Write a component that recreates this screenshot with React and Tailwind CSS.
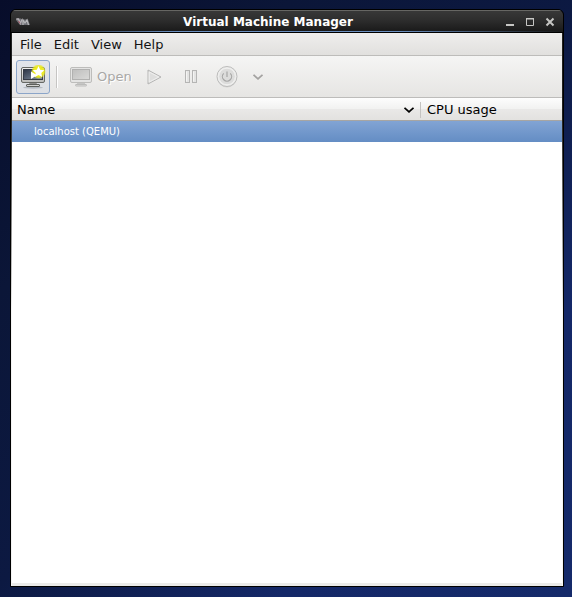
import React from "react";

const menus = ["File", "Edit", "View", "Help"];

function VmLogo() {
  return (
    <svg width="14" height="8" viewBox="0 0 14 8" fill="none" aria-hidden="true">
      <path d="M0 0.500h5l1 1h6l2 5.500H4L0 2z" fill="#707076" />
      <path d="M0.500 1h2l1.800 4.500L6 1.500" stroke="#b4b0b5" strokeWidth="1.400" />
      <path d="M7 7V2l2 3 2-3 1.500 5" stroke="#b9b9bb" strokeWidth="1.200" />
      <path d="M2.500 3l1.500 2.500" stroke="#a05560" strokeWidth="1" />
    </svg>
  );
}

function NewVmIcon() {
  return (
    <svg width="26" height="24" viewBox="0 0 26 24" aria-hidden="true">
      <defs>
        <linearGradient id="newScreen" x1="0" y1="0" x2="1" y2="1">
          <stop offset="0" stopColor="#2b3444" />
          <stop offset="1" stopColor="#8392a5" />
        </linearGradient>
        <linearGradient id="newFrame" x1="0" y1="0" x2="0" y2="1">
          <stop offset="0" stopColor="#f2f2f1" />
          <stop offset="1" stopColor="#b9b9b7" />
        </linearGradient>
        <radialGradient id="glow">
          <stop offset="0.6" stopColor="#eeed1c" />
          <stop offset="0.8" stopColor="#e8e824" stopOpacity="0.8" />
          <stop offset="1" stopColor="#e6e62c" stopOpacity="0" />
        </radialGradient>
      </defs>
      <ellipse cx="13" cy="22.500" rx="10" ry="1.200" fill="#9ba2ac" opacity="0.6" />
      <path d="M9.500 18h7l1 2h-9z" fill="#8d8d8b" />
      <rect x="6.500" y="19.500" width="13" height="2" rx="0.500" fill="#d2d2d0" stroke="#5d5f5b" />
      <rect x="1.500" y="2.500" width="23" height="15" rx="1.500" fill="url(#newFrame)" stroke="#666864" />
      <rect x="3.500" y="4.500" width="19" height="10" fill="url(#newScreen)" stroke="#353b46" />
      <circle cx="18.500" cy="6.500" r="7.500" fill="url(#glow)" />
      <path d="M11 6.500v7.500l6-3.800z" fill="#fff" />
      <path d="M18.500 1l1.700 3.700 4.100.5-3 2.800.8 4-3.600-2-3.600 2 .8-4-3-2.800 4.100-.5z" fill="#fff" />
    </svg>
  );
}

function MonitorIcon() {
  return (
    <svg width="22" height="20" viewBox="0 0 22 20" aria-hidden="true">
      <defs>
        <linearGradient id="offScreen" x1="0" y1="0" x2="1" y2="1">
          <stop offset="0" stopColor="#bebebd" />
          <stop offset="1" stopColor="#dadad9" />
        </linearGradient>
      </defs>
      <path d="M7.500 15h7l1 3h-9z" fill="#c6c6c5" />
      <rect x="5.500" y="17.500" width="11" height="1.500" rx="0.500" fill="#dededd" stroke="#bcbcba" />
      <rect x="0.500" y="0.500" width="21" height="15" rx="1.500" fill="#e4e4e3" stroke="#bdbdbb" />
      <rect x="2.500" y="2.500" width="17" height="10" fill="url(#offScreen)" stroke="#b1b1b0" />
    </svg>
  );
}

function PlayIcon() {
  return (
    <svg width="15" height="16" viewBox="0 0 15 16" fill="none" aria-hidden="true">
      <path d="M1 1v14l13-7z" fill="#dededd" stroke="#b5b5b4" strokeLinejoin="round" />
      <path d="M2.200 3v10l9.600-5z" stroke="#f0f0ef" />
    </svg>
  );
}

function PauseIcon() {
  return (
    <svg width="12" height="13" viewBox="0 0 12 13" aria-hidden="true">
      <g fill="#e4e4e3" stroke="#b5b5b4">
        <rect x="0.500" y="0.500" width="4" height="12" />
        <rect x="7.500" y="0.500" width="4" height="12" />
      </g>
      <path d="M1.500 1.500v10M8.500 1.500v10" stroke="#f4f4f3" />
    </svg>
  );
}

function PowerIcon() {
  return (
    <svg width="22" height="22" viewBox="0 0 22 22" fill="none" aria-hidden="true">
      <circle cx="11" cy="11.500" r="10" fill="#d6d5d4" />
      <circle cx="11" cy="10.500" r="10" fill="#ececeb" stroke="#bcbcbb" />
      <circle cx="11" cy="10.500" r="8.300" fill="#dcdcdb" stroke="#f0f0ef" />
      <path d="M7.700 7.300a4.600 4.600 0 1 0 6.600 0M11 5.500v5.500" stroke="#a6a6a5" strokeWidth="1.200" />
    </svg>
  );
}

function Chevron({ className }) {
  return (
    <svg className={className} width="10" height="6" viewBox="0 0 10 6" fill="none" aria-hidden="true">
      <path d="M0.500 0.800l4.500 4 4.500-4" stroke="currentColor" strokeWidth="1.800" />
    </svg>
  );
}

function TitleBar() {
  return (
    <header className="flex h-[23px] flex-col border-b border-black bg-linear-to-b from-[#393939] via-[#2c2c2c] to-[#191919]">
      <div className="flex flex-1 items-center border-t border-[#666663] pt-0.5 pr-[7px] pl-[5px]">
        <div className="flex w-4">
          <VmLogo />
        </div>
        <h1 className="flex-1 text-center text-[12px] leading-4 font-bold text-white">
          Virtual Machine Manager
        </h1>
        <div className="flex gap-2 text-[#c6c6c4]">
          <button type="button" aria-label="Minimize" className="w-3">
            <svg className="mx-auto" width="10" height="10" viewBox="0 0 10 10">
              <path d="M1 8h8" stroke="currentColor" strokeWidth="2" />
            </svg>
          </button>
          <button type="button" aria-label="Maximize" className="w-3">
            <svg className="mx-auto" width="10" height="10" viewBox="0 0 10 10" fill="none">
              <path d="M1.500 1v7.500h7V1M1 1.500h8" stroke="currentColor" />
              <path d="M1 2h8" stroke="currentColor" />
            </svg>
          </button>
          <button type="button" aria-label="Close" className="w-3">
            <svg className="mx-auto" width="10" height="10" viewBox="0 0 10 10">
              <path d="M1.500 1.500l7 7M8.500 1.500l-7 7" stroke="currentColor" strokeWidth="2" />
            </svg>
          </button>
        </div>
      </div>
      <div className="h-px bg-[linear-gradient(90deg,#191919,#6a8fc0_30%,#6a8fc0_70%,#191919)]" />
    </header>
  );
}

function Toolbar() {
  return (
    <div
      role="toolbar"
      className="flex h-[42px] items-center border-b border-[#bdbcba] bg-linear-to-b from-[#f5f5f4] to-[#e6e5e3] px-1 text-[#a9a8a6]"
    >
      <button
        type="button"
        aria-label="Create a new virtual machine"
        className="flex size-[34px] items-center justify-center rounded-[3px] border border-[#8ba5c9] bg-linear-to-b from-[#e2e5ea] to-[#dcdfe4]"
      >
        <NewVmIcon />
      </button>
      <div className="mx-[6px] h-[22px] w-[2px] border-l border-[#c6c5c3] bg-white" />
      <button type="button" disabled className="flex items-center gap-[5px] pr-[5px] pl-[6px] text-[13px] leading-4 [text-shadow:1px_1px_0_white]">
        <MonitorIcon />
        Open
      </button>
      <button type="button" disabled aria-label="Run" className="flex w-9 justify-center">
        <PlayIcon />
      </button>
      <button type="button" disabled aria-label="Pause" className="flex w-9 justify-center">
        <PauseIcon />
      </button>
      <button type="button" disabled aria-label="Shut down" className="flex w-9 justify-center">
        <PowerIcon />
      </button>
      <button type="button" disabled aria-label="Shut down options" className="flex w-[26px] justify-center">
        <Chevron className="text-[#a3a2a0]" />
      </button>
    </div>
  );
}

function MachineTable() {
  return (
    <table className="w-full table-fixed border-separate border-spacing-0 text-left">
      <thead>
        <tr className="h-[23px] bg-[linear-gradient(#fdfdfd,#f1f1f0_50%,#e9e8e7_50%,#e2e1df)] text-[13px] leading-4 text-black">
          <th scope="col" aria-sort="ascending" className="border-b border-[#a7a5a2] p-0 pt-0.5 font-normal">
            <button type="button" className="flex w-full items-center justify-between pl-[5px]">
              Name
              <span className="flex h-4 items-center border-r border-[#c4c3c1] pr-[6px]">
                <Chevron />
              </span>
            </button>
          </th>
          <th scope="col" className="w-[141px] border-b border-[#a7a5a2] p-0 pt-0.5 pl-[6px] font-normal">
            CPU usage
          </th>
        </tr>
      </thead>
      <tbody>
        <tr className="h-[21px] bg-linear-to-b from-[#82a4d4] to-[#648dc4] text-[10px] leading-4 text-white">
          <td className="p-0 pl-[22px]">localhost (QEMU)</td>
          <td className="p-0" />
        </tr>
      </tbody>
    </table>
  );
}

export default function App() {
  return (
    <div className="flex min-h-screen flex-col bg-[linear-gradient(135deg,#070d2a,#0b1638_25%,#0c1942_50%,#142868_75%,#152a6a)] pt-[9px] pr-2 pb-[10px] pl-[10px] font-['DejaVu_Sans',sans-serif]">
      <main className="flex flex-1 flex-col overflow-hidden rounded-t-[6px] border border-black bg-black">
        <TitleBar />
        <div className="flex flex-1 flex-col bg-linear-to-b from-[#222222] from-15% to-[#f4f4f3] to-50% px-px">
          <nav className="flex h-[23px] items-center gap-3 border-b border-[#bdbcba] bg-linear-to-b from-[#efeeed] to-[#e1e0de] pt-0.5 pl-2 text-[13px] leading-4 text-[#141414]">
            {menus.map((label) => (
              <button type="button" key={label}>
                {label}
              </button>
            ))}
          </nav>
          <Toolbar />
          <div className="flex-1 border-b-[3px] border-[#ebebe9] bg-white">
            <MachineTable />
          </div>
        </div>
      </main>
    </div>
  );
}
